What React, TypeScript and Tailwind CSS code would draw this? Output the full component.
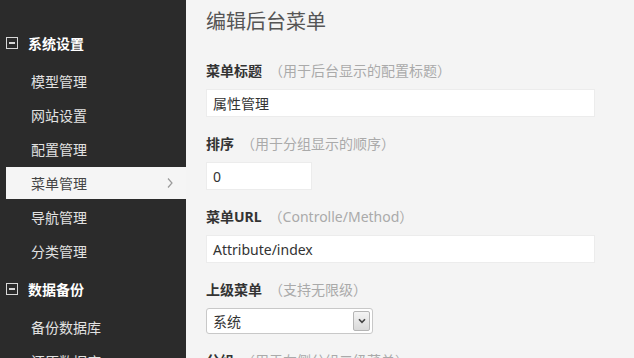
import React from "react";

const font = { fontFamily: '"Noto Sans", "Noto Sans CJK SC", sans-serif' };

function Minus() {
  return (
    <span className="flex h-[12px] w-[12px] items-center justify-center border-[1.5px] border-[#d8d8d8]">
      <span className="h-[1.5px] w-[6px] bg-[#d8d8d8]" />
    </span>
  );
}

function Header({ label }: { label: string }) {
  return (
    <div className="flex h-[42px] items-center pl-[6px]">
      <Minus />
      <span className="ml-[10px] text-[14px] font-bold text-white">{label}</span>
    </div>
  );
}

function Item({ label, active }: { label: string; active?: boolean }) {
  if (active) {
    return (
      <div className="flex h-[34px] items-center py-[1px] pl-[6px]">
        <div className="flex h-full w-full items-center justify-between bg-[#f5f5f5] pl-[25px] pr-[12px]">
          <span className="text-[14px] text-[#444]">{label}</span>
          <svg width="8" height="12" viewBox="0 0 8 12" fill="none">
            <path d="M2 1.5 L6 6 L2 10.5" stroke="#9a9a9a" strokeWidth="1.2" />
          </svg>
        </div>
      </div>
    );
  }
  return (
    <div className="flex h-[34px] items-center pl-[31px]">
      <span className="text-[14px] text-[#e2e2e2]">{label}</span>
    </div>
  );
}

function Label({ title, hint }: { title: string; hint: string }) {
  return (
    <div className="mb-[8px] flex h-[20px] items-center text-[14px] leading-[20px]">
      <span className="font-bold text-[#333]">{title}</span>
      <span className="ml-[7px] text-[#aaa]">{hint}</span>
    </div>
  );
}

export default function App() {
  return (
    <div className="flex h-[358px] w-full overflow-hidden bg-[#f4f4f4]" style={font}>
      <aside className="w-[186px] shrink-0 bg-[#2b2b2b] pt-[22px]">
        <Header label="系统设置" />
        <Item label="模型管理" />
        <Item label="网站设置" />
        <Item label="配置管理" />
        <Item label="菜单管理" active />
        <Item label="导航管理" />
        <Item label="分类管理" />
        <Header label="数据备份" />
        <Item label="备份数据库" />
        <Item label="还原数据库" />
      </aside>
      <main className="flex-1 pl-[20px] pt-[8px]">
        <h1 className="mb-[25px] text-[20px] font-normal leading-[28px] text-[#555]">编辑后台菜单</h1>

        <Label title="菜单标题" hint="（用于后台显示的配置标题）" />
        <div className="mb-[17px] flex h-[28px] w-[389px] items-center border border-[#ececec] bg-white pl-[6px] text-[14px] text-[#333]">
          属性管理
        </div>

        <Label title="排序" hint="（用于分组显示的顺序）" />
        <div className="mb-[17px] flex h-[28px] w-[106px] items-center border border-[#ececec] bg-white pl-[6px] text-[14px] text-[#333]">
          0
        </div>

        <Label title="菜单URL" hint="（Controlle/Method）" />
        <div className="mb-[17px] flex h-[28px] w-[389px] items-center border border-[#ececec] bg-white pl-[6px] text-[14px] text-[#333]">
          Attribute/index
        </div>

        <Label title="上级菜单" hint="（支持无限级）" />
        <div className="mb-[17px] flex h-[26px] w-[167px] items-center justify-between rounded-[3px] border border-[#c8c8c8] bg-white pl-[6px] pr-[2px] text-[14px] text-[#333]">
          <span>系统</span>
          <span className="flex h-[20px] w-[17px] items-center justify-center rounded-[2px] border border-[#b5b5b5] bg-gradient-to-b from-[#f4f4f4] to-[#d9d9d9]">
            <svg width="8" height="6" viewBox="0 0 8 6" fill="none">
              <path d="M1 1.2 L4 4.4 L7 1.2" stroke="#444" strokeWidth="1.6" />
            </svg>
          </span>
        </div>

        <Label title="分组" hint="（用于左侧分组二级菜单）" />
      </main>
    </div>
  );
}
